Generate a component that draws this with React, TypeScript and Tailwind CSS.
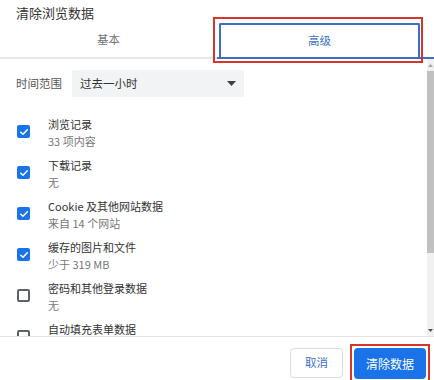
const items = [
  { title: "浏览记录", sub: "33 项内容", checked: true },
  { title: "下载记录", sub: "无", checked: true },
  { title: "Cookie 及其他网站数据", sub: "来自 14 个网站", checked: true },
  { title: "缓存的图片和文件", sub: "少于 319 MB", checked: true },
  { title: "密码和其他登录数据", sub: "无", checked: false },
  { title: "自动填充表单数据", sub: "", checked: false },
];

function Checkbox({ checked }: { checked: boolean }) {
  if (checked) {
    return (
      <div className="w-[13px] h-[13px] rounded-[2px] bg-[#1a73e8] flex items-center justify-center shrink-0">
        <svg width="10" height="10" viewBox="0 0 10 10" fill="none">
          <path d="M1.8 5.2 L4 7.3 L8.3 2.8" stroke="white" strokeWidth="1.5" strokeLinecap="round" strokeLinejoin="round" />
        </svg>
      </div>
    );
  }
  return <div className="w-[13px] h-[13px] rounded-[2px] border-2 border-[#5f6368] shrink-0" />;
}

export default function App() {
  return (
    <div
      className="w-[434px] h-[380px] bg-white flex flex-col overflow-hidden text-[#202124]"
      style={{ fontFamily: '"Noto Sans CJK SC", "Noto Sans", sans-serif' }}
    >
      {/* Title */}
      <div className="h-[23px] pt-[4px] pl-[16px] text-[13px] leading-[17px] text-[#333]">清除浏览数据</div>

      {/* Tabs */}
      <div className="grid grid-cols-2 h-[36px]">
        <div className="flex items-center justify-center text-[11.5px] text-[#777] border-b-2 border-[#e6e6e6]">基本</div>
        <div className="relative flex flex-col pl-[2px] border-b-2 border-[#3b6fc6]">
          <div className="flex-1 mr-[14px] border-2 border-b-0 border-[#3b6fc6] rounded-t-[2px] flex items-center justify-center text-[11.5px] text-[#3b6fc6]">
            高级
          </div>
          <div className="absolute left-[-4px] top-[-6px] w-[210px] h-[46px] border-2 border-[#d9342b] pointer-events-none" />
        </div>
      </div>

      {/* Content */}
      <div className="flex flex-1 min-h-0">
        <div className="flex-1 overflow-hidden">
          <div className="flex items-center mt-[11px] h-[27px]">
            <div className="pl-[16px] w-[72px] text-[11.5px] text-[#555]">时间范围</div>
            <div className="w-[172px] h-[27px] bg-[#f1f3f4] rounded-[2px] flex items-center justify-between pl-[8px] pr-[8px]">
              <span className="text-[11.5px] text-[#333]">过去一小时</span>
              <svg width="9" height="5" viewBox="0 0 9 5">
                <path d="M0 0 L9 0 L4.5 5 Z" fill="#3c4043" />
              </svg>
            </div>
          </div>

          <div className="flex flex-col gap-[7px] mt-[19px]">
            {items.map((it) => (
              <div key={it.title} className="flex items-start h-[34px]">
                <div className="pl-[17px] pt-[9px] w-[48px]">
                  <Checkbox checked={it.checked} />
                </div>
                <div className="flex flex-col">
                  <span className="text-[11px] leading-[17px] text-[#333]">{it.title}</span>
                  <span className="text-[11px] leading-[17px] text-[#777]">{it.sub}</span>
                </div>
              </div>
            ))}
          </div>
        </div>

        {/* Scrollbar */}
        <div className="w-[7px] flex flex-col bg-[#f1f1f1]">
          <div className="h-[12px] flex items-center justify-center">
            <svg width="5" height="3" viewBox="0 0 5 3">
              <path d="M0 3 L5 3 L2.5 0 Z" fill="#a3a3a3" />
            </svg>
          </div>
          <div className="h-[182px] bg-[#c1c1c1]" />
          <div className="flex-1" />
          <div className="h-[12px] flex items-center justify-center">
            <svg width="5" height="3" viewBox="0 0 5 3">
              <path d="M0 0 L5 0 L2.5 3 Z" fill="#505050" />
            </svg>
          </div>
        </div>
      </div>

      {/* Footer */}
      <div className="h-[44px] border-t border-[#e3e3e3] flex items-start justify-end pt-[11px] pr-[8px] gap-[11px]">
        <button className="w-[53px] h-[30px] border border-[#dadce0] rounded-[4px] bg-white text-[11.5px] text-[#3b6fc6]">
          取消
        </button>
        <div className="relative">
          <button className="w-[72px] h-[31px] rounded-[4px] bg-[#1a73e8] text-white text-[12px]">清除数据</button>
          <div className="absolute left-[-4px] top-[-4px] w-[80px] h-[40px] border-2 border-[#d9342b] pointer-events-none" />
        </div>
      </div>
    </div>
  );
}
